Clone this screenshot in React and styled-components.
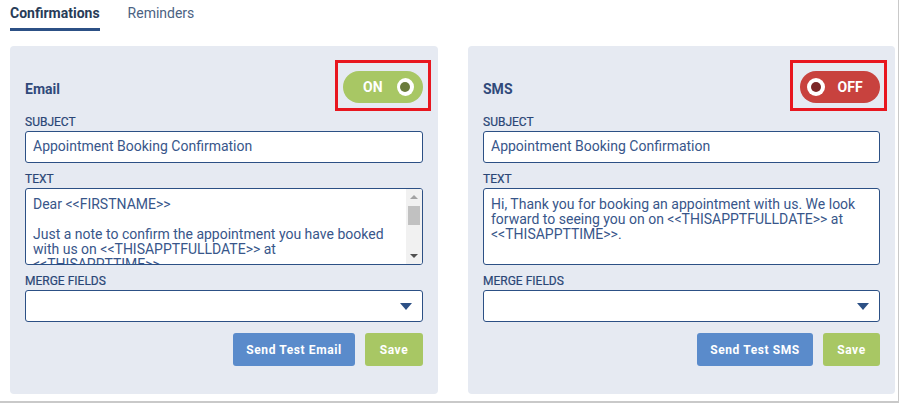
import styled, { createGlobalStyle } from "styled-components";

const GlobalStyle = createGlobalStyle`
  html, body {
    margin: 0;
    padding: 0;
    background: #ffffff;
    font-family: Roboto, "Liberation Sans", Arial, sans-serif;
  }
  * {
    box-sizing: border-box;
  }
`;

/* ===== Page ===== */
const Page = styled.div`
  width: 899px;
  height: 403px;
  border-right: 1px solid #c9c9c9;
  border-bottom: 2px solid #c9c9c9;
  padding: 0 3px 0 10px;
`;

/* ===== Tabs ===== */
const Tabs = styled.nav`
  display: flex;
  gap: 28px;
  height: 46px;
`;

const Tab = styled.div`
  height: 31px;
  padding-top: 5px;
  font-size: 14px;
  font-weight: ${({ active }) => (active ? 700 : 400)};
  color: ${({ active }) => (active ? "#283c58" : "#4b6282")};
  border-bottom: 3px solid ${({ active }) => (active ? "#2c5085" : "transparent")};
`;

/* ===== Panels ===== */
const Panels = styled.div`
  display: grid;
  grid-template-columns: 428px 427px;
  gap: 30px;
`;

const Panel = styled.section`
  background: #e6eaf2;
  border-radius: 4px;
  height: 348px;
  padding: 14px 15px 0 15px;
  display: flex;
  flex-direction: column;
`;

const Header = styled.div`
  display: flex;
  align-items: center;
  justify-content: space-between;
  height: 51px;
  margin-right: ${({ $pull }) => $pull}px;
`;

const Title = styled.h3`
  margin: 6px 0 0 0;
  font-size: 14px;
  font-weight: 700;
  color: #30497a;
`;

/* ===== Toggle ===== */
const ToggleFrame = styled.div`
  border: 3px solid #e8161f;
  padding: ${({ $pad }) => $pad};
  height: 51px;
`;

const Pill = styled.div`
  width: 80px;
  height: 32px;
  border-radius: 16px;
  display: flex;
  align-items: center;
  flex-direction: ${({ on }) => (on ? "row" : "row-reverse")};
  padding: ${({ on }) => (on ? "0 9px 0 20px" : "0 17px 0 7px")};
  gap: ${({ on }) => (on ? "14px" : "12px")};
  background: ${({ on }) => (on ? "#a8c764" : "#c8423e")};
  color: #ffffff;
  font-size: 14px;
  font-weight: 700;
  letter-spacing: 0.2px;
`;

const Knob = styled.span`
  width: 18px;
  height: 18px;
  border-radius: 50%;
  background: #ffffff;
  display: flex;
  align-items: center;
  justify-content: center;

  &::after {
    content: "";
    width: 10px;
    height: 10px;
    border-radius: 50%;
    background: ${({ on }) => (on ? "#6a7b3b" : "#7b2626")};
  }
`;

/* ===== Fields ===== */
const Label = styled.label`
  display: block;
  font-size: 12px;
  font-weight: 400;
  line-height: 14px;
  color: #2a4676;
  -webkit-text-stroke: 0.2px #2a4676;
  margin: ${({ $top }) => $top}px 0 2px 0;
`;

const TextInput = styled.input`
  width: 100%;
  height: 32px;
  border: 1.5px solid #2c5085;
  border-radius: 3px;
  background: #ffffff;
  padding: 0 7px 2px 7px;
  font-family: Roboto, "Liberation Sans", Arial, sans-serif;
  font-size: 14px;
  color: #38568a;
  outline: none;
`;

const AreaBox = styled.div`
  display: flex;
  height: 77px;
  border: 1.5px solid #2c5085;
  border-radius: 3px;
  background: #ffffff;
  overflow: hidden;
`;

const TextArea = styled.textarea`
  flex: 1;
  min-width: 0;
  height: 100%;
  border: none;
  background: transparent;
  padding: 8px 7px 6px 7px;
  font-family: Roboto, "Liberation Sans", Arial, sans-serif;
  font-size: 14px;
  line-height: 15px;
  color: #38568a;
  resize: none;
  outline: none;
  overflow: hidden;
`;

/* ===== Scrollbar ===== */
const ScrollTrack = styled.div`
  width: 16px;
  background: #f1f1f1;
  display: flex;
  flex-direction: column;
  align-items: center;
`;

const ScrollButton = styled.div`
  height: 16px;
  width: 16px;
  display: flex;
  align-items: center;
  justify-content: center;

  &::after {
    content: "";
    width: 0;
    height: 0;
    border-left: 4px solid transparent;
    border-right: 4px solid transparent;
    ${({ dir }) =>
      dir === "up"
        ? "border-bottom: 4px solid #a3a3a3;"
        : "border-top: 4px solid #505050;"}
  }
`;

const ScrollThumb = styled.div`
  width: 12px;
  height: 19px;
  margin-top: 1px;
  background: #c1c1c1;
`;

const Spacer = styled.div`
  flex: 1;
`;

const Select = styled.div`
  height: 32px;
  border: 1.5px solid #2c5085;
  border-radius: 3px;
  background: #ffffff;
  display: flex;
  align-items: center;
  justify-content: flex-end;
  padding-right: 10px;
`;

const Caret = styled.span`
  width: 0;
  height: 0;
  border-left: 6px solid transparent;
  border-right: 6px solid transparent;
  border-top: 7px solid #2c5085;
`;

/* ===== Buttons ===== */
const Actions = styled.div`
  display: flex;
  justify-content: flex-end;
  gap: 10px;
  margin-top: 11px;
`;

const Button = styled.button`
  height: 33px;
  width: ${({ $w }) => $w}px;
  border: none;
  border-radius: 3px;
  background: ${({ variant }) => (variant === "save" ? "#a8c764" : "#5a8bcb")};
  color: #ffffff;
  font-family: Roboto, "Liberation Sans", Arial, sans-serif;
  font-size: 12px;
  font-weight: 700;
  letter-spacing: 0.6px;
  cursor: pointer;
`;

const emailBody = `Dear <<FIRSTNAME>>

Just a note to confirm the appointment you have booked with us on <<THISAPPTFULLDATE>> at <<THISAPPTTIME>>.

If you need to change or cancel your appointment, please contact us.

Kind regards`;

const smsBody =
  "Hi, Thank you for booking an appointment with us. We look forward to seeing you on on <<THISAPPTFULLDATE>> at <<THISAPPTTIME>>.";

function Toggle({ on }) {
  return (
    <ToggleFrame $pad={on ? "8px 5px 5px 5px" : "8px 4px 5px 7px"}>
      <Pill on={on ? 1 : 0}>
        <span>{on ? "ON" : "OFF"}</span>
        <Knob on={on ? 1 : 0} />
      </Pill>
    </ToggleFrame>
  );
}

function MessagePanel({ title, on, body, scroll, testLabel, testWidth, saveWidth, pull }) {
  return (
    <Panel>
      <Header $pull={pull}>
        <Title>{title}</Title>
        <Toggle on={on} />
      </Header>

      <Label $top={4}>SUBJECT</Label>
      <TextInput readOnly value="Appointment Booking Confirmation" />

      <Label $top={9}>TEXT</Label>
      <AreaBox>
        <TextArea readOnly value={body} />
        {scroll && (
          <ScrollTrack>
            <ScrollButton dir="up" />
            <ScrollThumb />
            <Spacer />
            <ScrollButton dir="down" />
          </ScrollTrack>
        )}
      </AreaBox>

      <Label $top={9}>MERGE FIELDS</Label>
      <Select>
        <Caret />
      </Select>

      <Actions>
        <Button $w={testWidth}>{testLabel}</Button>
        <Button variant="save" $w={saveWidth}>Save</Button>
      </Actions>
    </Panel>
  );
}

export default function App() {
  return (
    <Page>
      <GlobalStyle />
      <Tabs>
        <Tab active>Confirmations</Tab>
        <Tab>Reminders</Tab>
      </Tabs>

      <Panels>
        <MessagePanel
          title="Email"
          on
          body={emailBody}
          scroll
          testLabel="Send Test Email"
          testWidth={122}
          saveWidth={58}
          pull={-8}
        />
        <MessagePanel
          title="SMS"
          on={false}
          body={smsBody}
          testLabel="Send Test SMS"
          testWidth={116}
          saveWidth={57}
          pull={-7}
        />
      </Panels>
    </Page>
  );
}
